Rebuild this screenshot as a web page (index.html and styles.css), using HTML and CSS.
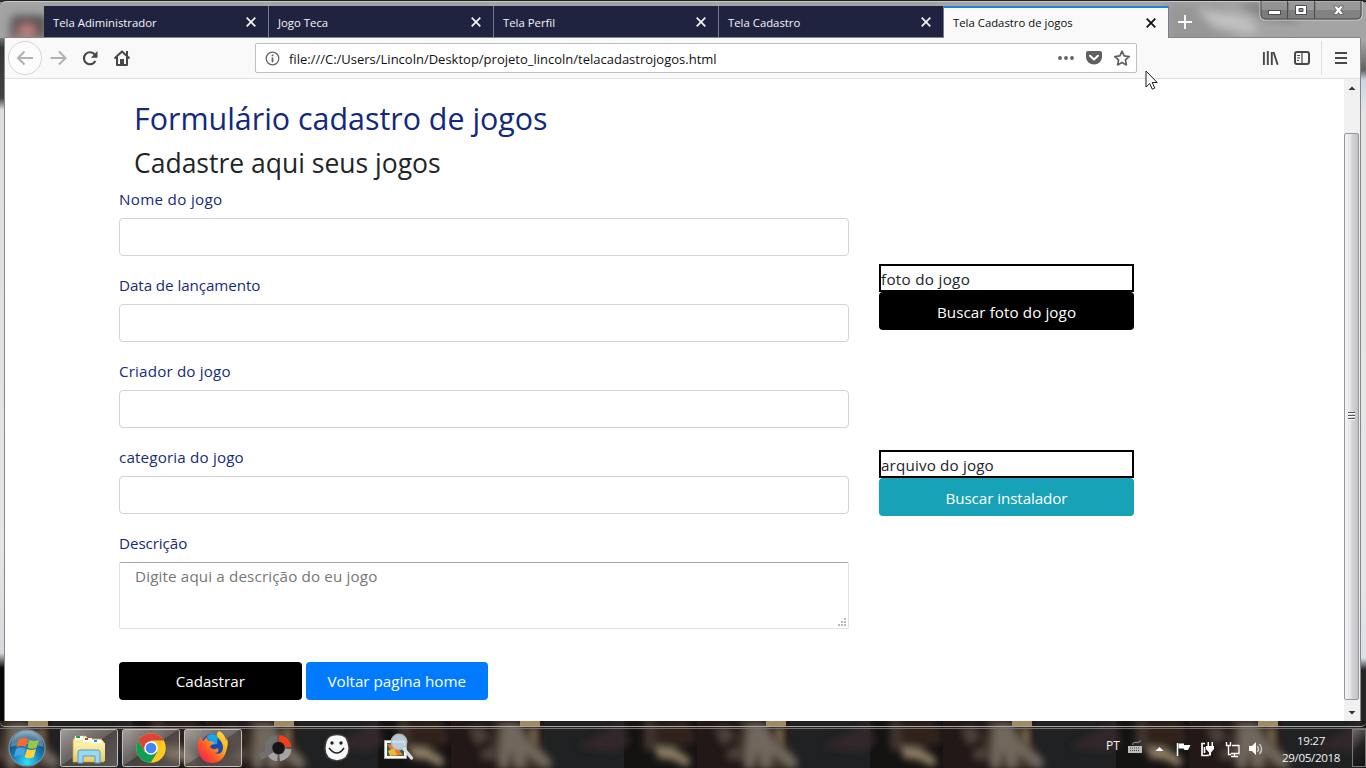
FILE: index.html
```
<!DOCTYPE html>
<html lang="pt-BR">
<head>
<meta charset="utf-8">
<title>Tela Cadastro de jogos</title>
<link rel="stylesheet" href="styles.css">
</head>
<body>
<svg class="wallpaper" width="1366" height="768" viewBox="0 0 1366 768">
  <defs>
    <filter id="soft" x="-20%" y="-20%" width="140%" height="140%"><feGaussianBlur stdDeviation="3.5"/></filter>
    <filter id="wide" x="-20%" y="-60%" width="140%" height="220%"><feGaussianBlur stdDeviation="5"/></filter>
    <g id="tile">
      <path d="M-55 0h93v50h-93z" fill="#211817"/>
      <path d="M38 0h80v50H38z" fill="#202122"/>
      <g filter="url(#soft)">
        <path d="M-10 0l26 4 18 20 14 26H-2l-14-18z" fill="#42382f"/>
        <path d="M-4 6L12 5l10 18 24 18-6 9-20-16-2 16h-8l-4-20-6 20h-8z" fill="#71675d"/>
        <path d="M24 8h8v18l-6-2z" fill="#7a6a50"/>
        <path d="M70 28l48-26 5 23-14 8z" fill="#33282a"/>
        <path d="M138 0h10l3 24 30 12-2 11-28-14-13-3z" fill="#3f352d"/>
        <path d="M148 4l32-4 12 20-10 8-32-6z" fill="#30211e"/>
        <path d="M151 27l16 1 18 13-4 7-14-7-16-2z" fill="#8a7a60"/>
        <path d="M-38 10l14-3 8 12-14 8zM-24 30l12-2 4 14-18-2z" fill="#4c3f38"/>
      </g>
      <path d="M14 2h20v6H14z" fill="#b59c6e" opacity=".85"/>
    </g>
  </defs>
  <rect width="1366" height="768" fill="#151312"/>
  <use href="#tile" x="14" y="719"/><use href="#tile" x="260" y="719"/><use href="#tile" x="506" y="719"/>
  <use href="#tile" x="752" y="719"/><use href="#tile" x="998" y="719"/><use href="#tile" x="1244" y="719"/>
  <rect width="1366" height="2" fill="#302b2f"/>
  <rect y="2" width="1366" height="40" fill="#a4a4a4"/>
  <g filter="url(#wide)">
    <path d="M12 16h34v22H10z" fill="#4c4949"/>
    <ellipse cx="27" cy="30" rx="10" ry="5" fill="#d08a8a"/>
    <path d="M1168 4h55l12 40h-67z" fill="#969696"/>
    <path d="M1196 8l54 10 8 16-42-6z" fill="#c2c2c2"/>
    <path d="M1235 3h53l10 20-32-4z" fill="#808080"/>
  </g>
</svg>
<div class="window">
  <div class="tabs">
    <div class="tab"><span>Tela Adiministrador</span><svg class="x" viewBox="0 0 10 10"><path d="M.7.7l8.6 8.6M9.3.7L.7 9.3"/></svg></div>
    <div class="tab"><span>Jogo Teca</span><svg class="x" viewBox="0 0 10 10"><path d="M.7.7l8.6 8.6M9.3.7L.7 9.3"/></svg></div>
    <div class="tab"><span>Tela Perfil</span><svg class="x" viewBox="0 0 10 10"><path d="M.7.7l8.6 8.6M9.3.7L.7 9.3"/></svg></div>
    <div class="tab"><span>Tela Cadastro</span><svg class="x" viewBox="0 0 10 10"><path d="M.7.7l8.6 8.6M9.3.7L.7 9.3"/></svg></div>
    <div class="tab active"><span>Tela Cadastro de jogos</span><svg class="x" viewBox="0 0 10 10"><path d="M.7.7l8.6 8.6M9.3.7L.7 9.3"/></svg></div>
    <svg class="plus" width="14" height="14" viewBox="0 0 14 14"><path d="M7 0v14M0 7h14" stroke="#fff" stroke-width="1.800"/></svg>
    <svg class="controls" width="104" height="21" viewBox="0 0 104 21">
      <path d="M1 0v14q0 5 5 5h92q5 0 5-5V0z" fill="#777" fill-opacity=".75" stroke="#d0d0d0"/>
      <path d="M2 0v13q0 5 5 5h90q5 0 5-5V0M28.500 0v18M55.500 0v18" fill="none" stroke="#4b4b4b"/>
      <path d="M2.500 1H28v8H2.500zM30 1h25v8H30zM57 1h44v8H57z" fill="#fff" opacity=".18"/>
      <rect x="9.500" y="9.500" width="12" height="4" fill="#fff" stroke="#4c4c55"/>
      <path d="M36.500 4.500h11v9h-11zM40 7.500h4v3h-4z" fill="#fff" fill-rule="evenodd" stroke="#4c4c55"/>
      <path d="M74.500 5h3.500l1.500 2 1.500-2h3.500l-3 4.300 3.200 4.200h-3.700l-1.500-2-1.500 2h-3.700l3.200-4.200z" fill="#fff" stroke="#4c4c55" stroke-width=".7"/>
    </svg>
  </div>
  <div class="middle">
    <div class="side left"></div>
    <div class="browser">
      <div class="nav">
        <svg width="135" height="40" viewBox="5 38 135 40" fill="none">
          <circle cx="25" cy="58" r="16.500" fill="#fcfcfc" stroke="#d5d5d5"/>
          <path d="M33 58H18.500M24.500 51.500L18 58l6.500 6.500M50.500 58H65M59 51.500l6.500 6.500-6.500 6.500" stroke="#b1b1b1" stroke-width="2"/>
          <path d="M94.800 54.700A6 6 0 1 0 95.300 61" stroke="#484848" stroke-width="2.200"/>
          <path d="M97.500 51v6.700h-6.700z" fill="#484848"/>
          <path d="M114.500 58.500l7.500-7 7.500 7M117 57v8h10v-8" stroke="#484848" stroke-width="2" stroke-linejoin="round"/>
          <path d="M120 59h4v7h-4zM126 51h2v5h-2z" fill="#484848"/>
        </svg>
        <div class="url">
          <svg width="15" height="15" viewBox="0 0 15 15" fill="none"><circle cx="7.500" cy="7.500" r="6.300" stroke="#626262" stroke-width="1.300"/><path d="M7.500 6.500v4.700M7.500 3.500v1.700" stroke="#626262" stroke-width="1.800"/></svg>
          <span class="address">file:///C:/Users/Lincoln/Desktop/projeto_lincoln/telacadastrojogos.html</span>
          <svg class="actions" width="80" height="20" viewBox="1055 48 80 20">
            <g fill="#606060"><circle cx="1060" cy="58" r="1.900"/><circle cx="1066" cy="58" r="1.900"/><circle cx="1072" cy="58" r="1.900"/>
            <path d="M1088 51h12q2 0 2 2v4a8 7.500 0 0 1-16 0v-4q0-2 2-2z"/></g>
            <path d="M1090 55.700l4 3.800 4-3.800" fill="none" stroke="#fff" stroke-width="2" stroke-linecap="round" stroke-linejoin="round"/>
            <path d="M1122 51.200l2.100 4.700 5.100.6-3.800 3.400 1 5-4.400-2.500-4.400 2.500 1-5-3.800-3.400 5.100-.6z" fill="none" stroke="#606060" stroke-width="1.700" stroke-linejoin="round"/>
          </svg>
        </div>
        <svg class="tools" width="100" height="40" viewBox="1260 38 100 40" fill="none" stroke="#484848">
          <path d="M1263.900 52v13M1267.800 51v14M1271.800 52v13M1273.500 52l4.200 12.800" stroke-width="1.900"/>
          <rect x="1295" y="52" width="14" height="12" rx="2" stroke-width="2"/>
          <path d="M1302 52v12M1297 55.500h3M1297 58h3M1297 60.500h2" stroke-width="1.200"/>
          <path d="M1321.500 41v34" stroke="#dedede"/>
          <path d="M1335 53h12M1335 58h12M1335 63h12" stroke-width="1.900"/>
        </svg>
      </div>
      <div class="view">
        <main class="page">
          <h2>Formulário cadastro de jogos</h2>
          <h3>Cadastre aqui seus jogos</h3>
          <div class="columns">
            <form class="form">
              <label class="wider">Nome do jogo</label><input type="text">
              <label class="tighter">Data de lançamento</label><input type="text">
              <label class="wide">Criador do jogo</label><input type="text">
              <label class="wide">categoria do jogo</label><input type="text">
              <label class="tighter">Descrição</label>
              <div class="description"><textarea placeholder="Digite aqui a descrição do eu jogo"></textarea><svg class="grip" width="9" height="9" viewBox="0 0 9 9"><path d="M6 0h2v2H6zM3 3h2v2H3zM6 3h2v2H6zM0 6h2v2H0zM3 6h2v2H3zM6 6h2v2H6z" fill="#b8b8b8"/></svg></div>
              <div class="buttons"><button type="button" class="btn black">Cadastrar</button><button type="button" class="btn blue">Voltar pagina home</button></div>
            </form>
            <aside class="uploads">
              <div class="upload"><div class="box wider">foto do jogo</div><button class="btn black">Buscar foto do jogo</button></div>
              <div class="upload"><div class="box wide">arquivo do jogo</div><button class="btn teal tighter">Buscar instalador</button></div>
            </aside>
          </div>
        </main>
        <div class="scroll">
          <svg width="16" height="642" viewBox="0 0 16 642">
            <defs><linearGradient id="thumb"><stop offset="0" stop-color="#f5f5f5"/><stop offset=".45" stop-color="#e4e4e6"/><stop offset=".55" stop-color="#d2d3d6"/><stop offset="1" stop-color="#c0c1c5"/></linearGradient></defs>
            <rect x=".5" y="54.500" width="14" height="566" rx="1.500" fill="url(#thumb)" stroke="#969696"/>
            <path d="M4.500 11L8 7.500l3.500 3.500zM4.500 632L8 635.500l3.500-3.500z" fill="#333"/>
            <path d="M4 333.500h7M4 336.500h7M4 339.500h7" stroke="#555"/><path d="M4 334.500h7M4 337.500h7M4 340.500h7" stroke="#fff"/>
          </svg>
        </div>
      </div>
    </div>
    <div class="side right"></div>
  </div>
  <div class="foot"></div>
</div>
<div class="taskbar">
  <svg width="420" height="40" viewBox="0 728 420 40">
    <defs>
      <radialGradient id="orb" cx=".5" cy=".9" r=".85"><stop offset="0" stop-color="#2be4ff"/><stop offset=".45" stop-color="#1380bc"/><stop offset=".8" stop-color="#174e77"/><stop offset="1" stop-color="#6592ad"/></radialGradient>
      <linearGradient id="glass" x1="0" y1="0" x2="1" y2="1"><stop offset="0" stop-color="#c2bfbd" stop-opacity=".8"/><stop offset=".48" stop-color="#8b8582" stop-opacity=".65"/><stop offset=".5" stop-color="#5a5450" stop-opacity=".7"/><stop offset="1" stop-color="#8d837b" stop-opacity=".55"/></linearGradient>
      <linearGradient id="fox" x1="1" y1="0" x2="0" y2="1"><stop offset="0" stop-color="#fff044"/><stop offset=".35" stop-color="#ffac1b"/><stop offset=".65" stop-color="#ff5128"/><stop offset="1" stop-color="#e4146b"/></linearGradient>
      <linearGradient id="folder" x2="0" y2="1"><stop offset="0" stop-color="#fff3ad"/><stop offset="1" stop-color="#e9ca68"/></linearGradient>
    </defs>
    <circle cx="27" cy="748" r="18" fill="url(#orb)" stroke="#7890a0" stroke-width="1.200"/>
    <path d="M10.500 747a16.500 16 0 0 1 33 0q-17-6-33 0z" fill="#fff" opacity=".28"/>
    <path d="M18.500 739.500q5-3 9.500-.5l-2 8q-5-2-9.500.5z" fill="#f26b31"/><path d="M29.500 739.700q5 2.500 9.500 0l-2.500 8q-4.500 2-9-.3z" fill="#9cc645"/>
    <path d="M16 749q5-2.500 9.500-.5l-2 8q-4.500-2.500-9.500.5z" fill="#4aa3e0"/><path d="M27 749q4.500 2 9 0l-2 8q-5 2.500-9.500 0z" fill="#ffd23d"/>
    <g fill="url(#glass)" stroke="#c3c0bd"><rect x="60.500" y="729.500" width="57" height="37" rx="2"/><rect x="122.500" y="729.500" width="57" height="37" rx="2"/><rect x="184.500" y="729.500" width="57" height="37" rx="2"/></g>
    <path d="M73 740l3-4h10l2 3h13l3 3v20H73z" fill="url(#folder)" stroke="#c7a553" stroke-width=".7"/>
    <path d="M75 736h8v4h-8z" fill="#fff"/><path d="M76 736h4v2h-4z" fill="#24a34a"/><path d="M83 738h9v4h-9z" fill="#fff"/><path d="M85 738h3v2h-3z" fill="#cf4420"/><path d="M91 740h11v4H91z" fill="#fff"/><path d="M94 740h3v2h-3z" fill="#268dda"/>
    <path d="M74 743h31v18H74z" fill="url(#folder)"/>
    <path d="M78 763v-11q0-2 2-2h18q2 0 2 2v11h-5v-7H83v7z" fill="#9bd7f0" stroke="#4b9fc5"/>
    <circle cx="151" cy="748" r="14.800" fill="#fbc91f"/>
    <path d="M138.200 740.600a14.800 14.800 0 0 1 25.600 0H151l-6.400 11z" fill="#db4437"/>
    <path d="M138.200 740.600a14.800 14.800 0 0 0 12.500 22.200l6.700-11h-12.800z" fill="#0f9d58"/>
    <circle cx="151" cy="748" r="6.800" fill="#fff"/><circle cx="151" cy="748" r="5.300" fill="#4285f4"/>
    <circle cx="213" cy="746" r="12" fill="#184bb5"/><path d="M207 736q6-4 11 0l-1 8-7 1z" fill="#19a5e6"/>
    <path d="M201 738l2 3 4-4 1 4q4 0 7 2-4 1-5 4 3 4 8 1 2 5-4 5 8 3 9-5 0-5-4-9-4-4-1-7l1-1q6 3 7 10 1-2 0-4 3 5 1 11-3 15-15 15t-14.500-15q0-6 2.500-10z" fill="url(#fox)"/>
    <g fill="none" stroke-width="6.500"><path d="M279 738.500a9.500 9.500 0 0 1 9.200 8.500" stroke="#f63d17"/><path d="M288.200 749a9.500 9.500 0 0 1-8.600 9M277.500 758a9 9 0 0 1-7-4" stroke="#a4a4a4"/><path d="M277 738.500c-6 .3-9 5-8.500 10 0 4-4 7-8.500 8" stroke="#707070"/></g>
    <circle cx="278.500" cy="748" r="6.200" fill="#171514"/>
    <path d="M337 734.500q10 0 11 8 3 9-2 15-9 7-18 0-5-6-2-16 2-7 11-7z" fill="#f7f7f7" stroke="#3b3b3b" stroke-width="1.500"/>
    <circle cx="332" cy="743" r="1.700" fill="#222"/><circle cx="341" cy="743" r="1.700" fill="#222"/><path d="M329 748q8 10 15 0" fill="none" stroke="#222" stroke-width="1.500"/>
    <path d="M384.500 740.500h22v18h-22z" fill="#fff" stroke="#aaa"/><path d="M387 743h17v13h-17z" fill="#246553"/><path d="M387 744l8 1 8 10-9 1z" fill="#e67b20"/><path d="M388 751l6-3 3 7-7 1z" fill="#f4b53e"/>
    <circle cx="399" cy="742" r="7.700" fill="#c8d9e5" fill-opacity=".9" stroke="#aeb7bd" stroke-width="1.500"/><path d="M404 749l7.500 9" stroke="#ddd" stroke-width="3.500" stroke-linecap="round"/>
  </svg>
  <div class="tray">
    <span class="lang">PT</span>
    <svg width="140" height="40" viewBox="1126 728 140 40">
      <rect x="1128" y="746" width="14" height="7" fill="#bdbdbd"/><path d="M1130 748h10M1130 750.500h10" stroke="#444" stroke-dasharray="1 1"/><path d="M1133 745q-1-3 3-2.500 3 .5 5-2" fill="none" stroke="#a0a0a0"/>
      <path d="M1155.500 751l4-4 4 4z" fill="#fff"/>
      <path d="M1177.500 743v13" stroke="#fff" stroke-width="1.500"/><path d="M1178.500 743.500h5.500v1.500h6.500l-2.500 5h-3.500l-1-1.500h-5z" fill="#fff"/>
      <path d="M1205 743.500h-3v12h6v-1" fill="none" stroke="#fff" stroke-width="1.700"/><path d="M1204.500 747v6" stroke="#fff" stroke-width="1.700"/><path d="M1206 746h8v3l-3 3.500v3h-2v-3l-3-3.500zM1207.500 742h1.500v4h-1.500zM1211.500 742h1.500v4h-1.500z" fill="#fff"/>
      <path d="M1232 745.500h7v8h-8M1234.500 754v2M1231 756.500h7M1226.500 742v3.500h4V742M1228.500 745v9.500h2.500" fill="none" stroke="#fff" stroke-width="1.300"/>
      <path d="M1249 746h3l4-4v13l-4-4h-3z" fill="#fff"/><path d="M1257.500 746q2 3 0 6M1259.500 744q4 5 0 10" fill="none" stroke="#ddd" stroke-width="1.200"/>
    </svg>
    <div class="clock"><span>19:27</span><span>29/05/2018</span></div>
    <div class="peek"></div>
  </div>
</div>
<svg class="cursor" width="14" height="21" viewBox="0 0 14 21"><path d="M1 1v16l3.700-3.500 2.600 5.700 2.500-1.200-2.600-5.500h5z" fill="#fff" stroke="#181828"/></svg>
</body>
</html>
```
FILE: styles.css
```
* { box-sizing: border-box; }
body { margin: 0; width: 1366px; height: 768px; overflow: hidden; display: flex; flex-direction: column; background: #151312; font-family: "Open Sans", "Noto Sans", sans-serif; }
svg { display: block; flex: none; }
.wallpaper { position: absolute; z-index: -1; left: 0; top: 0; }
.window { height: 727px; display: flex; flex-direction: column; flex: none; }
.tabs { height: 38px; padding: 6px 3px 0 44px; display: flex; border-top: 1px solid #222; border-radius: 6px 6px 0 0; box-shadow: inset 0 1px #c9c9c9; }
.tab { width: 225px; height: 32px; margin-top: -1px; padding: 0 12px 0 9px; display: flex; align-items: center; justify-content: space-between; background: #202340; color: #f5f5f7; font-size: 11.35px; border-right: 1px solid #777b8f; flex: none; }
.tab .x { width: 10px; height: 10px; stroke: currentColor; stroke-width: 1.7; fill: none; }
.tab.active { background: #f9f9fa; color: #0c0c0d; border-top: 2px solid #1e84d8; padding-bottom: 1px; position: relative; z-index: 1; }
.plus { margin: 8px 0 0 9px; }
.controls { margin: -6px 0 0 auto; }
.middle { height: 683px; display: flex; }
.side { width: 5px; flex: none; }
.left { border-right: 1px solid #898989; background: linear-gradient(#757575 0, #343434 10px, #434343 60px, #dcdee0 72px, #e5e6e8 75%, #d7d9dc 615px, #080808 630px); }
.right { width: 6px; border-left: 1px solid #858585; background: linear-gradient(#aaa 0, #626262 32px, #ccd5e0 42px, #e5e5e6 75px, #e5e6e7 80%, #dce1e8 620px, #252525 632px); }
.browser { width: 1355px; flex: none; }
.nav { height: 42px; margin-top: -1px; display: flex; border-top: 1px solid #858585; border-bottom: 1px solid #e0e0e0; background: #f9f9fa; }
.url { margin: 5px 0 0 115px; width: 882px; height: 30px; display: flex; align-items: center; padding: 0 1px 0 9px; border: 1px solid #bfbfbf; border-radius: 2px; background: #fff; }
.address { margin: 2px 0 0 9px; font-size: 13px; color: #111; white-space: nowrap; }
.actions { margin-left: auto; }
.tools { margin-left: auto; }
.view { height: 642px; display: flex; background: #fff; }
.page { width: 1339px; padding: 19px 0 0 114px; }
.scroll { width: 16px; background: #f0f0f1; }
h2, h3 { margin: 0 0 8px 15px; font-weight: 400; white-space: nowrap; color: #212529; }
h2 { height: 38.4px; line-height: 42px; font-size: 30.4px; color: #11297e; }
h3 { height: 33.6px; line-height: 38px; font-size: 26.5px; }
.columns { display: flex; gap: 30px; }
.form { width: 730px; display: flex; flex-direction: column; align-items: flex-start; }
label { height: 24px; line-height: 27px; margin-bottom: 8px; font-size: 15.2px; color: #152c79; white-space: nowrap; }
.wider { letter-spacing: .3px; }
.wide { letter-spacing: .16px; }
.tighter { letter-spacing: -.08px; }
input { width: 730px; height: 38px; margin: 0 0 16px; border: 1px solid #ced4da; border-radius: 4px; background: #fff; }
.description { position: relative; height: 67px; }
textarea { display: block; resize: none; width: 730px; height: 67px; padding: 1px 15px; border: 1px solid #e0e2e4; border-top-color: #a7a7ab; border-radius: 2px; background: #fff; font: 15.2px/24px "Open Sans", "Noto Sans", sans-serif; letter-spacing: .14px; }
textarea::placeholder { color: #777; }
.grip { position: absolute; right: 2px; bottom: 2px; }
.buttons { margin-top: 33px; display: flex; gap: 4px; }
.btn { height: 38px; padding: 2px 0 0; border: 0; border-radius: 4px; color: #fff; font: 15.2px "Open Sans", "Noto Sans", sans-serif; }
.buttons .btn { width: 182.500px; padding-top: 0; }
.black { background: #000; }
.blue { background: #007bff; }
.teal { background: #17a2b8; }
.uploads { width: 255px; padding-top: 78px; display: flex; flex-direction: column; gap: 120px; }
.upload { display: flex; flex-direction: column; }
.upload .black { letter-spacing: .08px; }
.box { height: 28px; border: 2px solid #000; font-size: 15.2px; line-height: 27px; color: #212529; }
.foot { height: 6px; border-bottom: 1px solid #aaa5a1; border-radius: 0 0 5px 5px; }
.taskbar { margin-top: 1px; height: 40px; display: flex; justify-content: space-between; box-shadow: inset 0 1px #77716d; }
.tray { display: flex; color: #f5f5f5; font-size: 11.3px; }
.lang { width: 20px; line-height: 35px; font-size: 12px; }
.tray > svg { margin-right: 1px; }
.clock { width: 85px; padding: 4px 0 0 3px; display: flex; flex-direction: column; align-items: center; line-height: 17px; font-size: 11.6px; letter-spacing: -.35px; }
.peek { width: 14px; height: 38px; margin-top: 1px; border: 1px solid #777; background: linear-gradient(135deg, #6b6866, #242221 50%, #151414); }
.cursor { position: absolute; left: 1145px; top: 70px; }
```
